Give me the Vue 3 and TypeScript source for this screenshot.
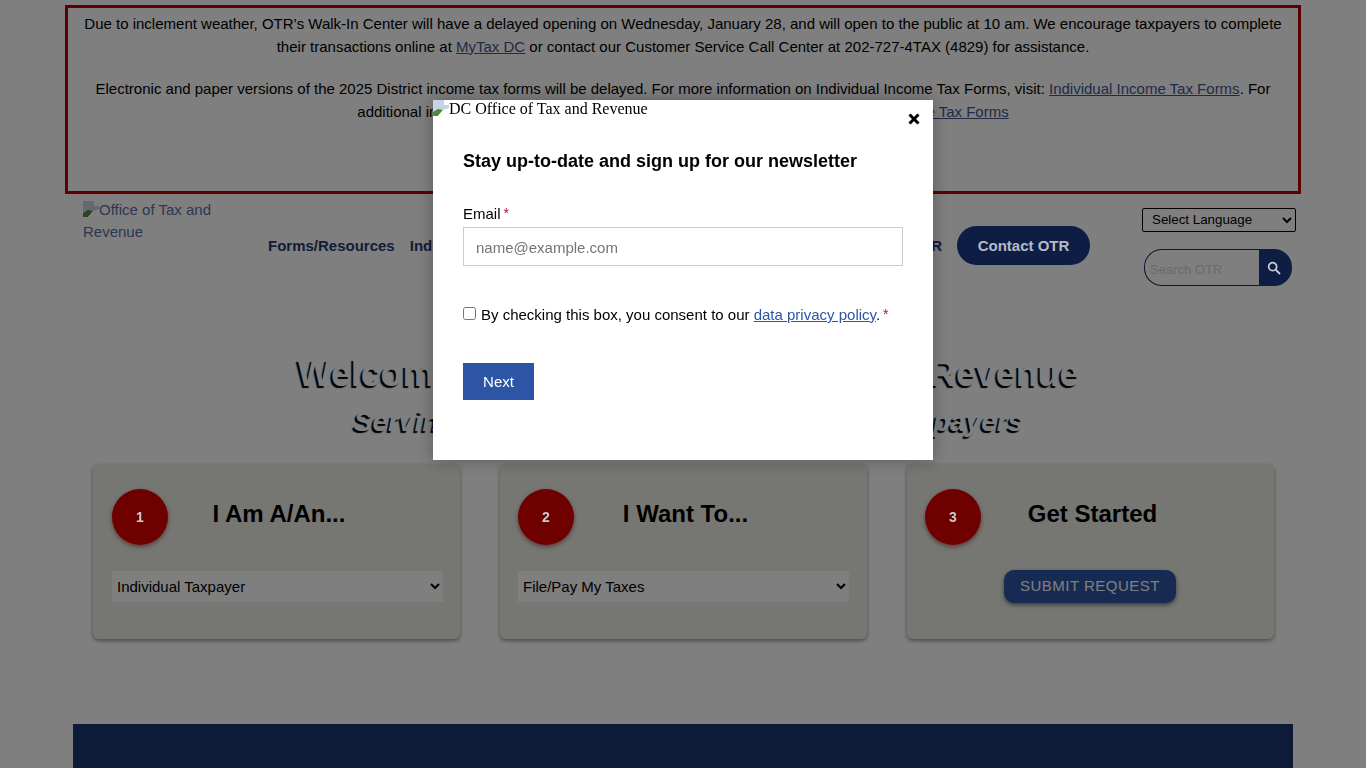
<script setup lang="ts">
interface Step {
  n: number
  title: string
  option?: string
}
const steps: Step[] = [
  { n: 1, title: 'I Am A/An...', option: 'Individual Taxpayer' },
  { n: 2, title: 'I Want To...', option: 'File/Pay My Taxes' },
  { n: 3, title: 'Get Started' },
]
const navGroup = ['Individuals', 'Businesses', 'Real Property', 'About OTR']
</script>

<template>
  <div class="page">
    <section class="banner">
      <p>
        Due to inclement weather, OTR’s Walk-In Center will have a delayed opening on Wednesday, January 28, and will open to the public at 10 am. We encourage taxpayers to complete their transactions online at
        <a href="#">MyTax DC</a> or contact our Customer Service Call Center at 202-727-4TAX (4829) for assistance.
      </p>
      <p>
        Electronic and paper versions of the 2025 District income tax forms will be delayed. For more information on Individual Income Tax Forms, visit: <a href="#">Individual Income Tax Forms</a>. For additional information on Business Income Tax Forms, please visit: <a href="#">Business Franchise Tax Forms</a>
      </p>
    </section>

    <header class="header">
      <a class="logo" href="#">
        <svg class="broken" viewBox="0 0 16 16" width="16" height="16" aria-hidden="true">
          <path d="M0 0h11l5 5v4L7 12 0 16z" fill="#c6d2e6" />
          <path d="M11 0l5 5h-5z" fill="#fff" />
          <path d="M0 16v-4l5-3 5 1-5 6z" fill="#4f8a3c" />
          <path d="M5 16l5-6 6-2v8z" fill="#fff" />
        </svg>Office of Tax and Revenue
      </a>
      <nav class="nav">
        <a href="#">Forms/Resources</a>
        <div class="nav-group">
          <a v-for="item in navGroup" :key="item" href="#">{{ item }}</a>
        </div>
        <a class="contact" href="#">Contact OTR</a>
      </nav>
      <div class="tools">
        <select class="lang"><option>Select Language</option></select>
        <form class="search" @submit.prevent>
          <input type="text" placeholder="Search OTR" />
          <button type="submit" aria-label="Search">
            <svg viewBox="0 0 24 24" width="16" height="16" aria-hidden="true">
              <circle cx="10" cy="10" r="6" fill="none" stroke="currentColor" stroke-width="2.6" />
              <path d="M14.5 14.5L21 21" stroke="currentColor" stroke-width="3" />
            </svg>
          </button>
        </form>
      </div>
    </header>

    <section class="hero">
      <h1>Welcome to the DC Office of Tax and Revenue</h1>
      <h2>Serving the District of Columbia and Its Taxpayers</h2>
    </section>

    <section class="cards">
      <article v-for="s in steps" :key="s.n" class="card">
        <div class="card-head">
          <span class="circle">{{ s.n }}</span>
          <h3>{{ s.title }}</h3>
        </div>
        <select v-if="s.option" class="card-select"><option>{{ s.option }}</option></select>
        <button v-else class="submit" type="button">Submit Request</button>
      </article>
    </section>

    <footer class="footer"></footer>
  </div>

  <div class="scrim">
    <div class="modal" role="dialog">
      <div class="modal-logo">
        <svg class="broken" viewBox="0 0 16 16" width="16" height="16" aria-hidden="true">
          <path d="M0 0h11l5 5v4L7 12 0 16z" fill="#c6d2e6" />
          <path d="M11 0l5 5h-5z" fill="#fff" />
          <path d="M0 16v-4l5-3 5 1-5 6z" fill="#4f8a3c" />
          <path d="M5 16l5-6 6-2v8z" fill="#fff" />
        </svg>DC Office of Tax and Revenue
      </div>
      <button class="close" type="button" aria-label="Close">
        <svg viewBox="0 0 12 12" width="12" height="12" aria-hidden="true">
          <path d="M1.5 1.5l9 9M10.5 1.5l-9 9" stroke="#000" stroke-width="3" />
        </svg>
      </button>
      <h2 class="modal-title">Stay up-to-date and sign up for our newsletter</h2>
      <label class="label" for="email">Email<span class="req">*</span></label>
      <input id="email" class="email" type="email" placeholder="name@example.com" />
      <label class="consent">
        <input type="checkbox" />
        <span>By checking this box, you consent to our <a href="#">data privacy policy</a>.<span class="req">*</span></span>
      </label>
      <button class="next" type="button">Next</button>
    </div>
  </div>
</template>

<style>
html, body { margin: 0; background: #fff; }
</style>

<style scoped>
.page {
  width: 1366px;
  height: 768px;
  overflow: hidden;
  font-family: "Liberation Sans", Arial, sans-serif;
  color: #000;
  display: flex;
  flex-direction: column;
}
.banner {
  box-sizing: border-box;
  width: 1236px;
  height: 189px;
  margin: 5px 0 0 65px;
  padding: 4px 10px;
  border: 3px solid #b80000;
  text-align: center;
  font-size: 15px;
  line-height: 23px;
  flex: none;
}
.banner p { margin: 0 0 19px; }
.banner a { color: #3f5690; }
.header {
  display: flex;
  height: 106px;
  flex: none;
}
.logo {
  display: block;
  width: 165px;
  margin: 5px 0 0 83px;
  font-size: 15px;
  line-height: 22px;
  color: #5a709f;
  text-decoration: none;
  flex: none;
}
.broken { vertical-align: -2px; }
.nav {
  display: flex;
  align-items: center;
  height: 39px;
  margin: 32px 0 0 20px;
  width: 822px;
  flex: none;
  font-size: 15px;
  font-weight: 700;
}
.nav a { color: #253a70; text-decoration: none; white-space: nowrap; }
.nav-group {
  flex: 1;
  display: flex;
  justify-content: space-between;
  margin: 0 15px;
}
.nav a.contact {
  position: relative;
  z-index: 11;
  box-sizing: border-box;
  width: 133px;
  height: 39px;
  line-height: 39px;
  text-align: center;
  border-radius: 20px;
  background: #0d1d44;
  color: #b5bac4;
}
.tools {
  display: flex;
  flex-direction: column;
  margin: 14px 0 0 52px;
}
.lang {
  box-sizing: border-box;
  width: 154px;
  height: 24px;
  padding: 0 0 2px 5px;
  font: 13.33px "Liberation Sans", Arial, sans-serif;
  background: #fff;
  border: 1px solid #000;
  border-radius: 2px;
  color: #000;
}
.search {
  display: flex;
  width: 148px;
  height: 37px;
  margin: 17px 0 0 2px;
}
.search input {
  box-sizing: border-box;
  width: 115px;
  height: 37px;
  padding: 4px 5px 0;
  border: 1px solid #1a2f66;
  border-right: none;
  border-radius: 18px 0 0 18px;
  background: #fff;
  font: 13px "Liberation Sans", Arial, sans-serif;
}
.search input::placeholder { color: #d5d5d5; }
.search button {
  position: relative;
  z-index: 11;
  width: 33px;
  height: 37px;
  padding: 0 4px 0 0;
  border: none;
  border-radius: 0 18px 18px 0;
  background: #0d1d44;
  color: #c8ccd4;
  display: flex;
  align-items: center;
  justify-content: center;
}
.hero { text-align: center; flex: none; padding-left: 11px; }
.hero h1, .hero h2 {
  margin: 0;
  color: #fff;
  font-weight: 700;
  text-shadow: -2px 2px 1px #000;
}
.hero h1 { font-size: 36px; line-height: 44px; margin-top: 52px; letter-spacing: -0.12px; }
.hero h2 { font-size: 28px; line-height: 40px; font-style: italic; margin-top: 6px; }
.cards {
  display: flex;
  gap: 40px;
  margin: 22px 0 0 93px;
  flex: none;
}
.card {
  box-sizing: border-box;
  width: 367px;
  height: 175px;
  padding: 25px 18px 0;
  background: #ecece6;
  border-radius: 6px;
  box-shadow: 0 2px 4px rgba(0, 0, 0, 0.4);
}
.card:first-child { padding-left: 19px; }
.card-head {
  display: grid;
  grid-template-columns: 56px 1fr 56px;
  height: 56px;
  margin-bottom: 26px;
}
.circle {
  position: relative;
  z-index: 11;
  width: 56px;
  height: 56px;
  border-radius: 50%;
  background: #6e0000;
  color: #ccc;
  font-weight: 700;
  font-size: 14px;
  display: flex;
  align-items: center;
  justify-content: center;
  box-shadow: 0 2px 4px rgba(60, 0, 0, 0.5);
}
.card-head h3 {
  margin: 6px 0 0;
  padding-left: 4px;
  font-size: 24px;
  line-height: 37px;
  text-align: center;
  white-space: nowrap;
}
.card-select {
  display: block;
  box-sizing: border-box;
  width: 331px;
  height: 31px;
  border: none;
  background: #fff;
  font: 15px "Liberation Sans", Arial, sans-serif;
  color: #000;
  padding: 0 0 0 1px;
}
.submit {
  display: block;
  box-sizing: border-box;
  width: 172px;
  height: 33px;
  margin: -1px 0 0 79px;
  padding: 0 0 2px;
  border: none;
  border-radius: 10px;
  background: #2c55a5;
  color: #fff;
  font: 15px "Liberation Sans", Arial, sans-serif;
  letter-spacing: 0.5px;
  text-transform: uppercase;
  box-shadow: 0 2px 4px rgba(0, 0, 0, 0.5);
}
.footer {
  width: 1220px;
  height: 44px;
  margin: 85px 0 0 73px;
  background: #1c3670;
  flex: none;
}
.scrim {
  position: fixed;
  inset: 0;
  z-index: 10;
  background: rgba(0, 0, 0, 0.5);
  font-family: "Liberation Sans", Arial, sans-serif;
}
.modal {
  position: absolute;
  left: 433px;
  top: 100px;
  z-index: 20;
  box-sizing: border-box;
  width: 500px;
  height: 360px;
  padding: 0 30px;
  background: #fff;
  box-shadow: 0 0 16px rgba(0, 0, 0, 0.3);
}
.modal-logo {
  margin-left: -30px;
  height: 40px;
  font: 16px/18px "Liberation Serif", "Times New Roman", serif;
  color: #000;
  white-space: nowrap;
}
.close {
  position: absolute;
  top: 13px;
  right: 13px;
  width: 12px;
  height: 12px;
  padding: 0;
  border: none;
  background: none;
  display: flex;
}
.modal-title {
  margin: 10px 0 0;
  font-size: 18px;
  line-height: 22px;
  font-weight: 700;
}
.label {
  display: block;
  margin-top: 31px;
  font-size: 15px;
  line-height: 20px;
}
.req { color: #b0123b; margin-left: 3px; font-size: 14px; vertical-align: 1px; }
.email {
  display: block;
  box-sizing: border-box;
  width: 440px;
  height: 39px;
  margin-top: 3px;
  padding: 2px 12px 0;
  border: 1px solid #ccc;
  font: 15px "Liberation Sans", Arial, sans-serif;
}
.email::placeholder { color: #757575; }
.consent {
  display: flex;
  align-items: flex-start;
  margin-top: 38px;
  font-size: 15px;
  line-height: 20px;
}
.consent input { margin: 3px 5px 0 0; width: 13px; height: 13px; }
.consent a { color: #2c55a5; }
.next {
  display: block;
  width: 71px;
  height: 37px;
  margin-top: 38px;
  border: none;
  background: #2c55a5;
  color: #fff;
  font: 15px "Liberation Sans", Arial, sans-serif;
}
</style>
